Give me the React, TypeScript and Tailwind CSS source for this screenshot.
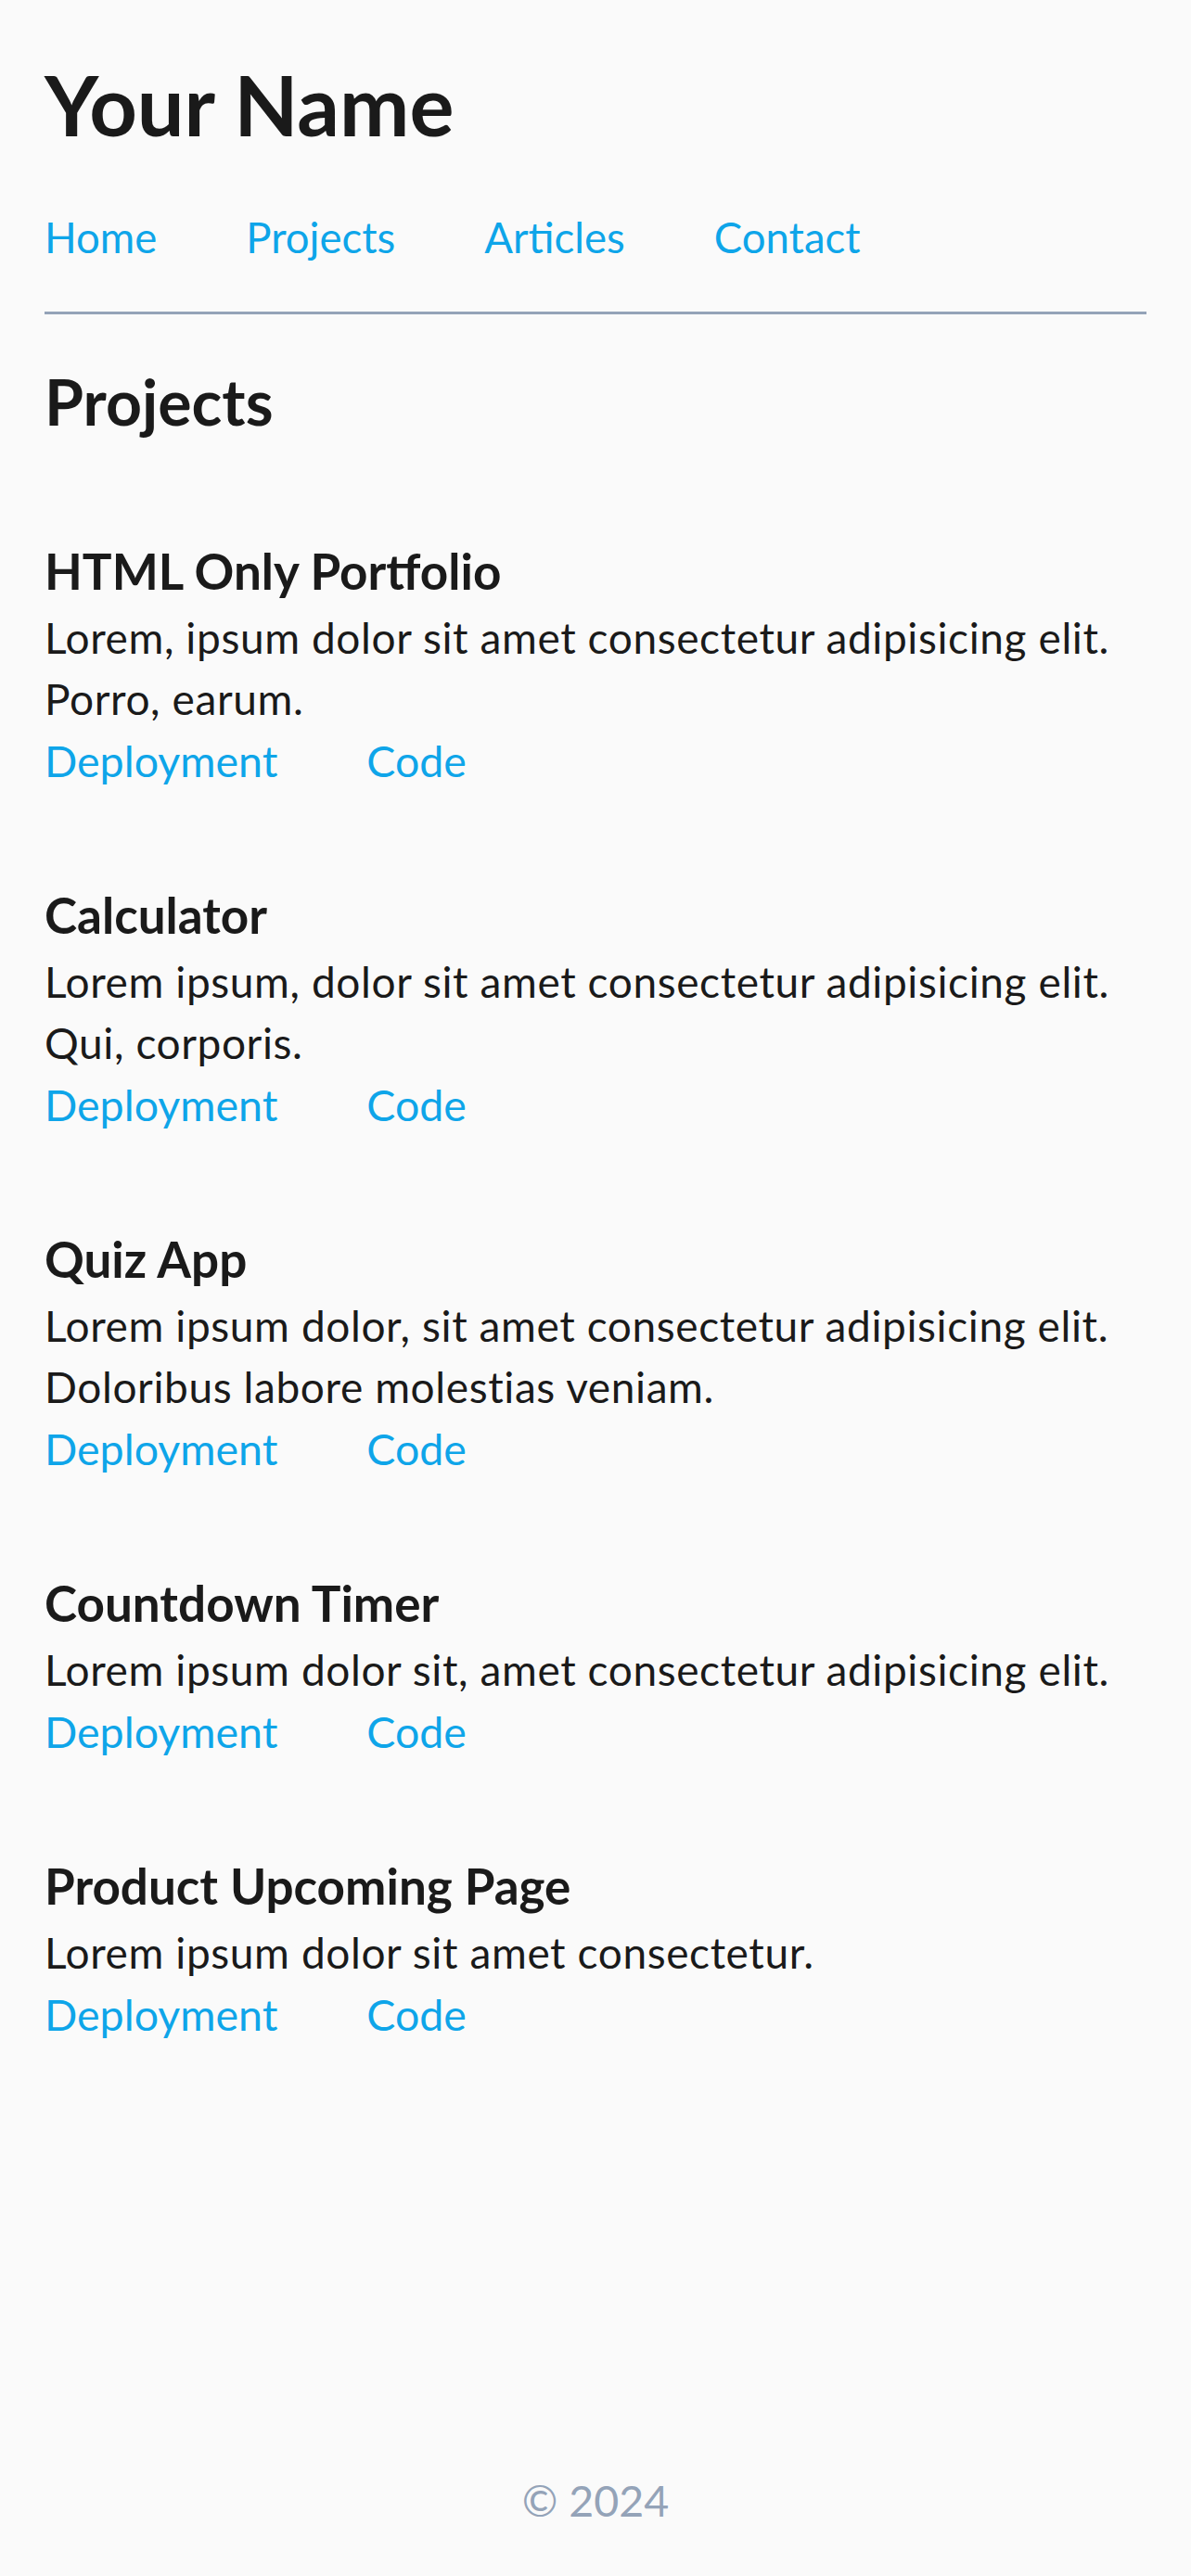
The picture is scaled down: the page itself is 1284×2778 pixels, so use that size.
const projects = [
  {
    title: 'HTML Only Portfolio',
    text: 'Lorem, ipsum dolor sit amet consectetur adipisicing elit. Porro, earum.',
  },
  {
    title: 'Calculator',
    text: 'Lorem ipsum, dolor sit amet consectetur adipisicing elit. Qui, corporis.',
  },
  {
    title: 'Quiz App',
    text: 'Lorem ipsum dolor, sit amet consectetur adipisicing elit. Doloribus labore molestias veniam.',
  },
  {
    title: 'Countdown Timer',
    text: 'Lorem ipsum dolor sit, amet consectetur adipisicing elit.',
  },
  {
    title: 'Product Upcoming Page',
    text: 'Lorem ipsum dolor sit amet consectetur.',
  },
]

const navLinks = ['Home', 'Projects', 'Articles', 'Contact']

function App() {
  return (
    <div className="flex min-h-screen flex-col bg-[#fafafa] px-12 pt-[57px] font-['Lato',sans-serif] text-[#1a1a1a]">
      <header className="border-b-[3px] border-[#94a3b8] pb-[47px]">
        <h1 className="text-[90px] font-bold leading-[110px]">Your Name</h1>
        <nav className="mt-[56px] flex gap-24 text-[45.5px] leading-[66px]">
          {navLinks.map((link) => (
            <a key={link} href="#" className="text-[#0ea5e9]">
              {link}
            </a>
          ))}
        </nav>
      </header>

      <main className="flex-1 pt-[51px]">
        <h2 className="text-[68px] font-bold leading-[86px]">Projects</h2>
        <div className="mt-[107px] flex flex-col gap-[101px]">
          {projects.map((project) => (
            <article key={project.title}>
              <h3 className="text-[53px] font-bold leading-[66px]">{project.title}</h3>
              <p className="mt-[6px] text-[46px] leading-[66px] tracking-[0.6px]">{project.text}</p>
              <div className="flex gap-24 text-[46.5px] leading-[66px]">
                <a href="#" className="text-[#0ea5e9]">
                  Deployment
                </a>
                <a href="#" className="text-[#0ea5e9]">
                  Code
                </a>
              </div>
            </article>
          ))}
        </div>
      </main>

      <footer className="pb-[49px] text-center text-[46.5px] leading-[66px] text-[#94a3b8]">© 2024</footer>
    </div>
  )
}

export default App
